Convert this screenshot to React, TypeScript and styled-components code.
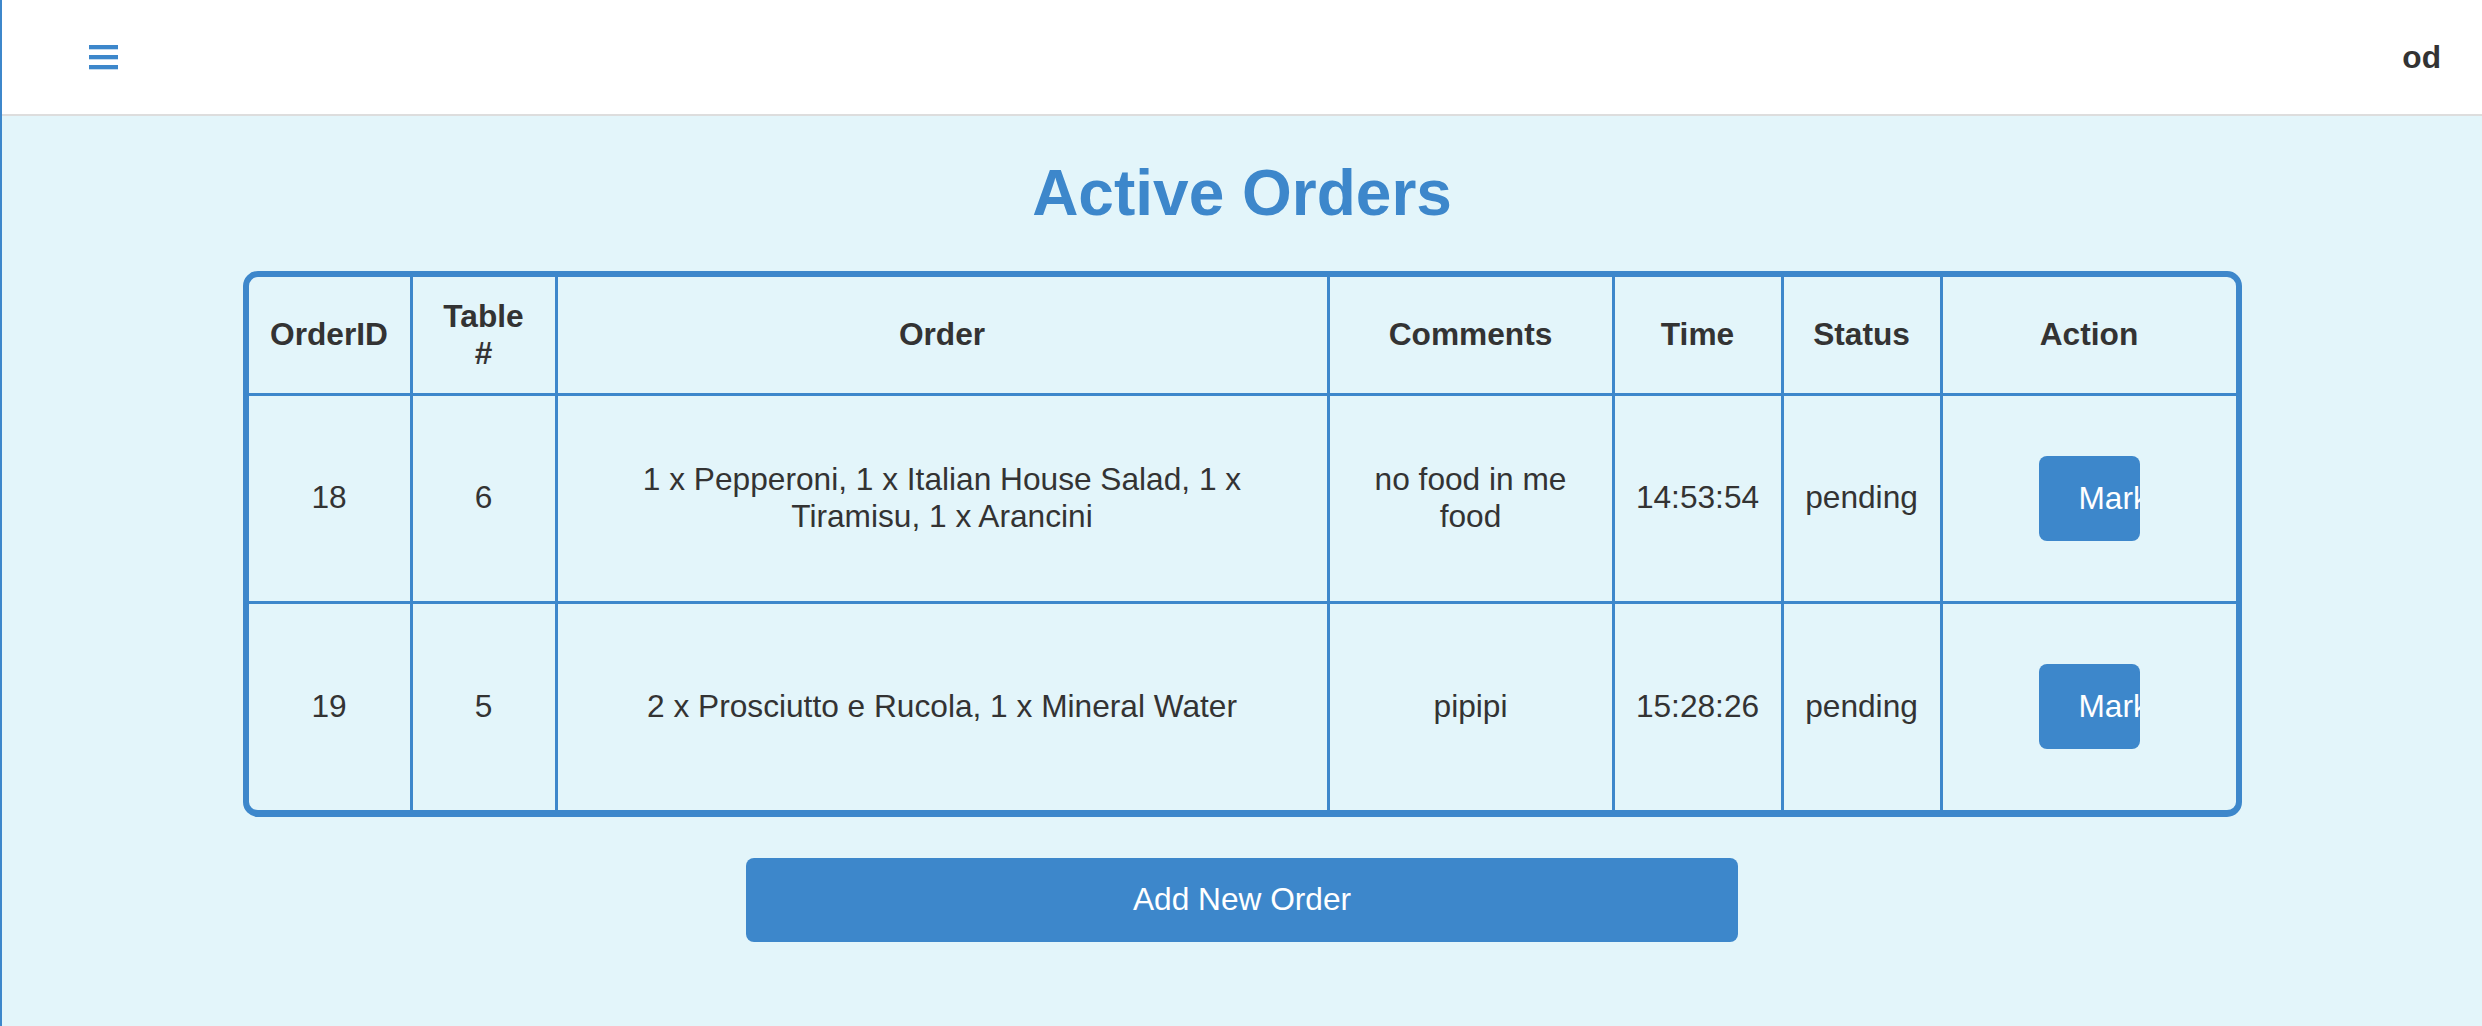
import { Fragment } from 'react';
import styled, { createGlobalStyle } from 'styled-components';

const BLUE = '#3d87cb';
const TEXT = '#333333';

const GlobalStyle = createGlobalStyle`
  * {
    box-sizing: border-box;
  }

  body {
    margin: 0;
    font-family: 'Liberation Sans', Arial, Helvetica, sans-serif;
    color: ${TEXT};
    background-color: #e3f5fa;
  }
`;

const Shell = styled.div`
  min-height: 100vh;
  display: flex;
  flex-direction: column;
  border-left: 2px solid ${BLUE};
  background-color: #e3f5fa;
`;

const TopBar = styled.header`
  height: 116px;
  flex-shrink: 0;
  display: flex;
  align-items: center;
  justify-content: space-between;
  padding: 0 41px 0 87px;
  background-color: #ffffff;
  border-bottom: 2px solid #dddddd;
`;

const MenuButton = styled.button`
  display: flex;
  padding: 0;
  border: none;
  background: none;
  cursor: pointer;

  & svg {
    display: block;
    width: 29px;
    height: 25px;
  }
`;

const UserName = styled.span`
  font-size: 31.66px;
  font-weight: 700;
  color: ${TEXT};
`;

const Main = styled.main`
  flex: 1;
  display: flex;
  flex-direction: column;
  align-items: center;
  padding: 39px 0 60px;
`;

const Title = styled.h1`
  margin: 0 0 39px;
  font-size: 64px;
  line-height: 1.2;
  font-weight: 700;
  color: ${BLUE};
`;

const OrdersGrid = styled.div`
  width: 1999px;
  display: grid;
  grid-template-columns: 164px 145px 772px 285px 169px 159px 1fr;
  border: 6px solid ${BLUE};
  border-bottom-width: 7px;
  border-radius: 15px;
  overflow: hidden;
`;

const Cell = styled.div<{ $lastCol?: boolean; $lastRow?: boolean; $head?: boolean }>`
  height: ${(p) => (p.$head ? 119 : p.$lastRow ? 206 : 208)}px;
  display: flex;
  align-items: center;
  justify-content: center;
  padding: 0 28px;
  text-align: center;
  font-size: 31.66px;
  font-weight: ${(p) => (p.$head ? 700 : 400)};
  line-height: ${(p) => (p.$head ? '37px' : '37.7px')};
  color: ${TEXT};
  border-right: ${(p) => (p.$lastCol ? 'none' : `3px solid ${BLUE}`)};
  border-bottom: ${(p) => (p.$lastRow ? 'none' : `3px solid ${BLUE}`)};
`;

const MarkButton = styled.button`
  flex-shrink: 0;
  width: 101px;
  height: 85px;
  padding: 0 0 0 40px;
  border: none;
  border-radius: 8px;
  background-color: ${BLUE};
  color: #ffffff;
  font-family: inherit;
  font-size: 31.66px;
  text-align: left;
  white-space: nowrap;
  overflow: hidden;
  cursor: pointer;
`;

const AddButton = styled.button`
  width: 992px;
  height: 84px;
  margin-top: 41px;
  border: none;
  border-radius: 8px;
  background-color: ${BLUE};
  color: #ffffff;
  font-family: inherit;
  font-size: 31.66px;
  cursor: pointer;
`;

const columns = ['OrderID', 'Table #', 'Order', 'Comments', 'Time', 'Status', 'Action'];

const orders = [
  {
    id: 18,
    table: 6,
    items: '1 x Pepperoni, 1 x Italian House Salad, 1 x Tiramisu, 1 x Arancini',
    comments: 'no food in me food',
    time: '14:53:54',
    status: 'pending',
  },
  {
    id: 19,
    table: 5,
    items: '2 x Prosciutto e Rucola, 1 x Mineral Water',
    comments: 'pipipi',
    time: '15:28:26',
    status: 'pending',
  },
];

function MenuIcon() {
  return (
    <svg viewBox="0 0 29 25" fill={BLUE}>
      <rect x="0" y="0" width="29" height="4.3" />
      <rect x="0" y="10" width="29" height="4.3" />
      <rect x="0" y="20" width="29" height="4.3" />
    </svg>
  );
}

export default function App() {
  return (
    <>
      <GlobalStyle />
      <Shell>
        <TopBar>
          <MenuButton title="Menu">
            <MenuIcon />
          </MenuButton>
          <UserName>od</UserName>
        </TopBar>

        <Main>
          <Title>Active Orders</Title>

          <OrdersGrid>
            {columns.map((col, i) => (
              <Cell key={col} $head $lastCol={i === columns.length - 1}>
                {col}
              </Cell>
            ))}

            {orders.map((o, r) => {
              const lastRow = r === orders.length - 1;
              return (
                <Fragment key={o.id}>
                  <Cell $lastRow={lastRow}>{o.id}</Cell>
                  <Cell $lastRow={lastRow}>{o.table}</Cell>
                  <Cell $lastRow={lastRow}>{o.items}</Cell>
                  <Cell $lastRow={lastRow}>{o.comments}</Cell>
                  <Cell $lastRow={lastRow}>{o.time}</Cell>
                  <Cell $lastRow={lastRow}>{o.status}</Cell>
                  <Cell $lastRow={lastRow} $lastCol>
                    <MarkButton>Mark as Done</MarkButton>
                  </Cell>
                </Fragment>
              );
            })}
          </OrdersGrid>

          <AddButton>Add New Order</AddButton>
        </Main>
      </Shell>
    </>
  );
}
